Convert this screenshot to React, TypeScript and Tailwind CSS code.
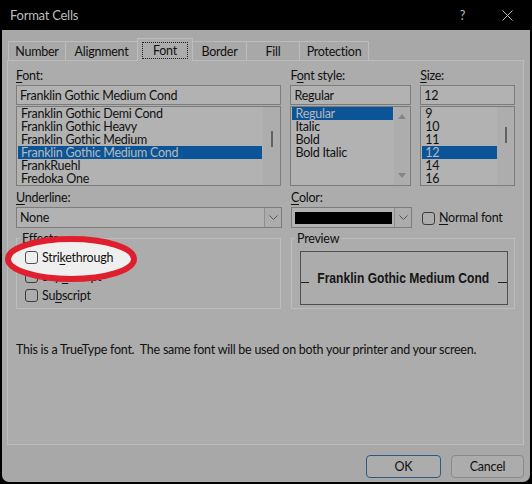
import type { ReactNode } from "react";

const FONTS = [
  "Franklin Gothic Demi Cond",
  "Franklin Gothic Heavy",
  "Franklin Gothic Medium",
  "Franklin Gothic Medium Cond",
  "FrankRuehl",
  "Fredoka One",
];
const STYLES = ["Regular", "Italic", "Bold", "Bold Italic"];
const SIZES = ["9", "10", "11", "12", "14", "16"];

const TABS = [
  { label: "Number", w: "w-[58px]" },
  { label: "Alignment", w: "w-[73px]" },
  { label: "Font", w: "w-[56px]", active: true },
  { label: "Border", w: "w-[55px]" },
  { label: "Fill", w: "w-[54px]" },
  { label: "Protection", w: "w-[70px]" },
];

function Box({ children }: { children?: ReactNode }) {
  return (
    <span className="inline-block h-[13px] w-[13px] shrink-0 rounded-[3px] border border-[#3c3c3c]">{children}</span>
  );
}

function Chevron() {
  return (
    <svg width="9" height="5" viewBox="0 0 9 5" className="text-[#555]">
      <path d="M0.5 0.5 L4.5 4.5 L8.5 0.5" fill="none" stroke="currentColor" strokeWidth="1" />
    </svg>
  );
}

function List({
  items,
  selected,
  hl,
  scroll,
}: {
  items: string[];
  selected: number;
  hl: string;
  scroll: ReactNode;
}) {
  return (
    <div className="flex h-[80px] border border-[#7c7c7c] bg-[#b2b2b2]">
      <div className="flex-1 pl-[1px]">
        {items.map((it, i) => (
          <div
            key={it}
            className={`h-[13px] overflow-hidden pl-[3px] leading-[13px] ${hl} ${
              i === selected ? "bg-[#0a5497] text-[#b8b8b8]" : ""
            }`}
          >
            {it}
          </div>
        ))}
      </div>
      {scroll}
    </div>
  );
}

export default function App() {
  return (
    <div className="relative h-[484px] w-[532px] overflow-hidden bg-black font-['Lato',sans-serif] text-[12.5px] leading-[15px] tracking-[-0.25px] text-[#111]">
      {/* title bar */}
      <div className="flex h-[30px] items-center pl-[10px] pr-[19px] text-[#bdbdbd]">
        <span className="text-[13px]">Format Cells</span>
        <span className="ml-auto mr-[37px] text-[12.5px]">?</span>
        <svg width="11" height="11" viewBox="0 0 11 11">
          <path d="M0.5 0.5 L10.5 10.5 M10.5 0.5 L0.5 10.5" stroke="#bdbdbd" strokeWidth="1" />
        </svg>
      </div>

      <div className="mx-[2px] h-[452px] rounded-b-[7px] bg-[#a8a8a8] px-[5px] pt-[8px]">
        {/* tabs */}
        <div className="flex h-[22px] items-end pl-[1px]">
          {TABS.map((t) =>
            t.active ? (
              <div
                key={t.label}
                className={`relative z-10 -mb-[1px] -ml-[1px] flex h-[23px] items-center justify-center border border-b-0 border-[#bcbcbc] bg-[#acacac] ${t.w}`}
              >
                <span className="flex h-[17px] w-[46px] items-center justify-center border border-dotted border-[#222]">
                  {t.label}
                </span>
              </div>
            ) : (
              <div
                key={t.label}
                className={`-ml-[1px] flex h-[19px] items-center justify-center border border-b-0 border-[#bcbcbc] first:ml-0 ${t.w}`}
              >
                {t.label}
              </div>
            )
          )}
        </div>

        {/* panel */}
        <div className="h-[385px] w-[517px] border border-[#bcbcbc] bg-[#acacac] px-[8px] pt-[7px]">
          <div className="flex">
            <div className="w-[266px]">
              <div className="mb-[2px] h-[15px]">
                <u className="underline-offset-2">F</u>ont:
              </div>
              <div className="mb-[1px] flex h-[20px] items-center border border-[#7c7c7c] bg-[#b2b2b2] pl-[3px]">
                Franklin Gothic Medium Cond
              </div>
              <List
                items={FONTS}
                selected={3}
                hl="mr-[1px]"
                scroll={
                  <div className="flex w-[17px] justify-center bg-[#adadad] pt-[24px]">
                    <div className="h-[16px] w-[2px] bg-[#626262]" />
                  </div>
                }
              />
            </div>

            <div className="ml-[9px] w-[121px]">
              <div className="mb-[2px] h-[15px]">
                F<u className="underline-offset-2">o</u>nt style:
              </div>
              <div className="mb-[1px] flex h-[20px] items-center border border-[#7c7c7c] bg-[#b2b2b2] pl-[3px]">
                Regular
              </div>
              <List
                items={STYLES}
                selected={0}
                hl="mr-[1px]"
                scroll={
                  <div className="flex w-[16px] flex-col items-center justify-between bg-[#adadad] pb-[7px] pt-[7px]">
                    <svg width="8" height="5" viewBox="0 0 8 5">
                      <path d="M0 5 L4 0 L8 5 Z" fill="#858585" />
                    </svg>
                    <svg width="8" height="5" viewBox="0 0 8 5">
                      <path d="M0 0 L4 5 L8 0 Z" fill="#858585" />
                    </svg>
                  </div>
                }
              />
            </div>

            <div className="ml-[9px] w-[95px]">
              <div className="mb-[2px] h-[15px]">
                <u className="underline-offset-2">S</u>ize:
              </div>
              <div className="mb-[1px] flex h-[20px] items-center border border-[#7c7c7c] bg-[#b2b2b2] pl-[3px]">
                12
              </div>
              <List
                items={SIZES}
                selected={3}
                hl=""
                scroll={
                  <div className="flex w-[17px] justify-center bg-[#adadad] pt-[20px]">
                    <div className="h-[16px] w-[2px] bg-[#626262]" />
                  </div>
                }
              />
            </div>
          </div>

          {/* underline / color row */}
          <div className="mt-[4px] flex">
            <div className="w-[266px]">
              <div className="mb-[2px] h-[15px]">
                <u className="underline-offset-2">U</u>nderline:
              </div>
              <div className="flex h-[21px] border border-[#7c7c7c] bg-[#b2b2b2]">
                <div className="flex flex-1 items-center pl-[3px]">None</div>
                <div className="flex w-[17px] items-center justify-center border-l border-[#8e8e8e] bg-[#acacac]">
                  <Chevron />
                </div>
              </div>
            </div>
            <div className="ml-[9px] w-[121px]">
              <div className="mb-[2px] h-[15px]">
                <u className="underline-offset-2">C</u>olor:
              </div>
              <div className="flex h-[21px] border border-[#7c7c7c] bg-[#b2b2b2]">
                <div className="flex flex-1 items-center pl-[3px] pr-[2px]">
                  <div className="h-[12px] w-full bg-black" />
                </div>
                <div className="flex w-[17px] items-center justify-center border-l border-[#8e8e8e] bg-[#acacac]">
                  <Chevron />
                </div>
              </div>
            </div>
            <div className="ml-[10px] flex items-end pb-[3px]">
              <Box />
              <span className="ml-[4px]">
                <u className="underline-offset-2">N</u>ormal font
              </span>
            </div>
          </div>

          {/* effects / preview */}
          <div className="mt-[3px] flex">
            <fieldset className="h-[78px] w-[265px] border border-[#bdbdbd] px-[3px]">
              <legend className="px-[2px] leading-[15px]">Effects</legend>
              <div className="pl-[5px] pt-[2px]">
                <div className="relative z-20 flex h-[19px] items-center">
                  <span className="inline-block h-[13px] w-[13px] rounded-[3px] border border-[#505050]" />
                  <span className="ml-[4px]">
                    Stri<u className="underline-offset-2">k</u>ethrough
                  </span>
                </div>
                <div className="flex h-[19px] items-center">
                  <Box />
                  <span className="ml-[4px]">
                    Sup<u className="underline-offset-2">e</u>rscript
                  </span>
                </div>
                <div className="flex h-[19px] items-center">
                  <Box />
                  <span className="ml-[4px]">
                    Su<u className="underline-offset-2">b</u>script
                  </span>
                </div>
              </div>
            </fieldset>
            <fieldset className="ml-[10px] h-[78px] w-[224px] border border-[#bdbdbd] px-[3px]">
              <legend className="px-[2px] leading-[15px]">Preview</legend>
              <div className="ml-[5px] mt-[5px] flex h-[54px] w-[208px] items-center border border-[#4f4f4f]">
                <div className="flex w-full items-baseline">
                  <span className="inline-block w-[8px] border-b border-[#222]" />
                  <span className="flex min-w-0 flex-1 justify-center whitespace-nowrap">
                    <span className="inline-block scale-x-[0.78] font-['Liberation_Sans',sans-serif] text-[15.5px] font-bold leading-[18px] tracking-normal text-[#151515]">
                      Franklin Gothic Medium Cond
                    </span>
                  </span>
                  <span className="inline-block w-[9px] border-b border-[#222]" />
                </div>
              </div>
            </fieldset>
          </div>

          <p className="mt-[33px] whitespace-nowrap">
            This is a TrueType font.&nbsp; The same font will be used on both your printer and your screen.
          </p>
        </div>

        {/* buttons */}
        <div className="mt-[10px] flex justify-end gap-[10px] pr-[1px]">
          <button className="h-[23px] w-[75px] rounded-[4px] border border-[#2c5a86] bg-[#acacac]">OK</button>
          <button className="h-[23px] w-[73px] rounded-[4px] border border-[#8a8a8a] bg-[#acacac]">Cancel</button>
        </div>
      </div>

      {/* red annotation ellipse */}
      <svg className="absolute left-[2px] top-[233px] z-10" width="138" height="52" viewBox="0 0 138 52">
        <ellipse cx="69" cy="26" rx="63" ry="20" fill="#efefef" stroke="#df1f2d" strokeWidth="6" />
      </svg>
    </div>
  );
}
